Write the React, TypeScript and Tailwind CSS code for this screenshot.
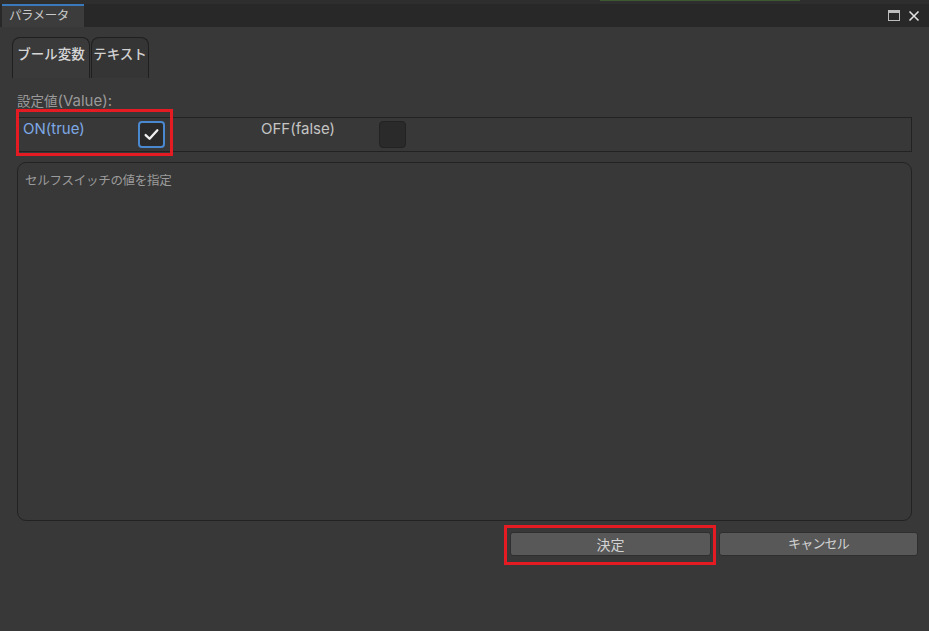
import * as React from "react";

const font = { fontFamily: '"Inter", "Noto Sans CJK JP", sans-serif' };

const Check = () => (
  <svg viewBox="0 0 16 16" className="size-[17px]" fill="none">
    <path d="M2.5 8.5 L6.2 12 L13.5 4" stroke="#f0f0f0" strokeWidth="2.2" strokeLinecap="round" strokeLinejoin="round" />
  </svg>
);

const App = () => {
  return (
    <div style={font} className="w-[929px] h-[631px] bg-[#383838] flex flex-col overflow-hidden">
      <div className="h-[4px] bg-[#2e2e2e] flex">
        <div className="ml-[600px] w-[200px] h-[1px] bg-[#3f5a32]" />
      </div>
      <div className="h-[23px] bg-[#282828] flex items-stretch">
        <div className="ml-[2px] w-[82px] bg-[#3c3c3c] border-t-2 border-[#3a79bb] flex items-center pl-[7px] text-[12.5px] tracking-[-0.5px] text-[#c8c8c8]">
          パラメータ
        </div>
        <div className="flex-1" />
        <div className="flex items-center gap-[8px] pr-[9px]">
          <div className="w-[12px] h-[11px] border border-[#bdbdbd] border-t-[3px]" />
          <svg viewBox="0 0 12 12" className="size-[12px]">
            <path d="M1.5 1.5 L10.5 10.5 M10.5 1.5 L1.5 10.5" stroke="#e0e0e0" strokeWidth="1.6" />
          </svg>
        </div>
      </div>

      <div className="flex flex-col flex-1 px-[17px]">
        <div className="flex mt-[10px] ml-[-5px] h-[41px]">
          <div className="w-[78px] rounded-t-[8px] border border-b-0 border-[#1f1f1f] bg-[#3a3a3a] pt-[6px] text-center text-[13.5px] font-medium text-[#d6d6d6]">
            ブール変数
          </div>
          <div className="ml-[1px] w-[58px] rounded-t-[8px] border border-b-0 border-[#1f1f1f] bg-[#353535] pt-[6px] text-center text-[13.5px] font-medium text-[#d0d0d0]">
            テキスト
          </div>
        </div>

        <div className="mt-[13px] text-[13.5px] text-[#9a9a9a] leading-[20px]">
          設定値<span className="text-[15px]">(Value):</span>
        </div>

        <div className="relative mt-[6px] h-[35px] border border-[#222222] flex items-center">
          <div className="w-[120px] pl-[5px] text-[15px] text-[#7ea8e6] -mt-[11px]">ON(true)</div>
          <div className="w-[27px] h-[27px] rounded-[4px] border-2 border-[#4a89d0] bg-[#2a2a2a] flex items-center justify-center">
            <Check />
          </div>
          <div className="ml-[96px] w-[118px] text-[15px] text-[#c4c4c4] -mt-[11px]">OFF(false)</div>
          <div className="w-[27px] h-[27px] rounded-[4px] border border-[#222222] bg-[#2a2a2a]" />
          <div className="absolute left-[-2px] top-[-9px] w-[157px] h-[47px] border-[3px] border-[#e51b24]" />
        </div>

        <div className="mt-[10px] h-[359px] rounded-[9px] border border-[#222222] px-[7px] pt-[9px] text-[12.5px] tracking-[-0.3px] text-[#9c9c9c]">
          セルフスイッチの値を指定
        </div>

        <div className="flex justify-end mt-[11px] gap-[8px] mr-[-6px]">
          <div className="relative">
            <div className="w-[201px] h-[24px] rounded-[3px] border border-[#2e2e2e] bg-[#585858] flex items-center justify-center text-[14px] text-[#d2d2d2]">
              決定
            </div>
            <div className="absolute left-[-6px] top-[-7px] w-[212px] h-[40px] border-[3px] border-[#e51b24]" />
          </div>
          <div className="w-[199px] h-[24px] rounded-[3px] border border-[#2e2e2e] bg-[#585858] flex items-center justify-center text-[13px] tracking-[-0.8px] text-[#d2d2d2]">
            キャンセル
          </div>
        </div>
      </div>
    </div>
  );
};

export default App;
